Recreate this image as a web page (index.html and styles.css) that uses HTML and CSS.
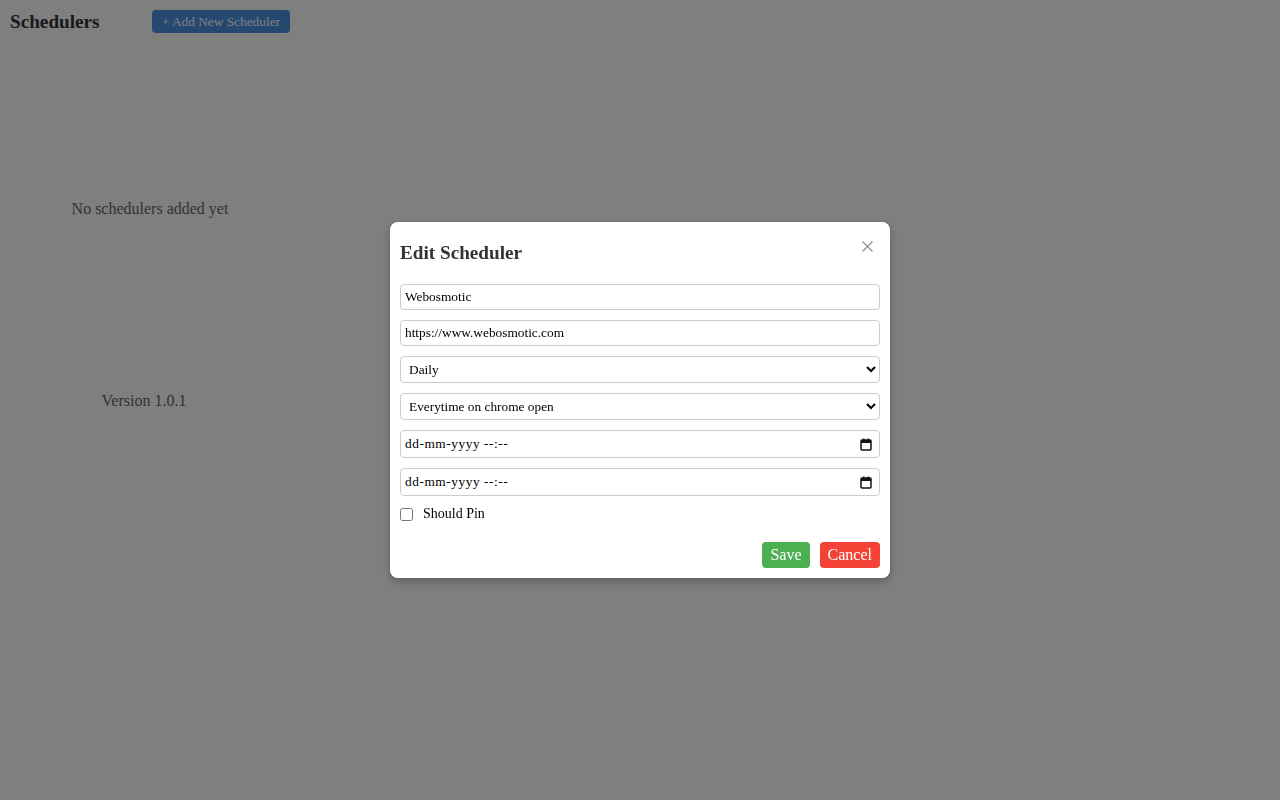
FILE: index.html
```html
<!DOCTYPE html>
<html lang="en">
<head>
<meta charset="utf-8">
<title>Schedulers</title>
<link rel="stylesheet" href="styles.css">
</head>
<body>
<div class="app">
  <header class="app-header">
    <h1 class="app-title">Schedulers</h1>
    <button class="btn-add">+ Add New Scheduler</button>
  </header>
  <div class="empty">No schedulers added yet</div>
  <div class="version">Version 1.0.1</div>
</div>

<div class="overlay">
  <div class="modal">
    <div class="modal-header">
      <h2 class="modal-title">Edit Scheduler</h2>
      <button class="modal-close" aria-label="Close">
        <svg width="11" height="11" viewBox="0 0 11 11"><path d="M0.5 0.5 L10.5 10.5 M10.5 0.5 L0.5 10.5" stroke="#8a8a8a" stroke-width="1.1" fill="none"/></svg>
      </button>
    </div>
    <form class="modal-form">
      <input class="field field-text" type="text" value="Webosmotic">
      <input class="field field-text" type="text" value="https://www.webosmotic.com">
      <select class="field field-select">
        <option>Daily</option>
      </select>
      <select class="field field-select">
        <option>Everytime on chrome open</option>
      </select>
      <div class="field field-date">
        <span class="date-placeholder">dd-mm-yyyy --:--</span>
        <svg class="cal-icon" width="12" height="13" viewBox="0 0 12 13"><rect x="1" y="2" width="10" height="10" rx="1" fill="none" stroke="#111" stroke-width="1.5"/><rect x="1" y="2" width="10" height="3" fill="#111"/><rect x="3" y="0.5" width="1.5" height="2" fill="#111"/><rect x="7.5" y="0.5" width="1.5" height="2" fill="#111"/></svg>
      </div>
      <div class="field field-date">
        <span class="date-placeholder">dd-mm-yyyy --:--</span>
        <svg class="cal-icon" width="12" height="13" viewBox="0 0 12 13"><rect x="1" y="2" width="10" height="10" rx="1" fill="none" stroke="#111" stroke-width="1.5"/><rect x="1" y="2" width="10" height="3" fill="#111"/><rect x="3" y="0.5" width="1.5" height="2" fill="#111"/><rect x="7.5" y="0.5" width="1.5" height="2" fill="#111"/></svg>
      </div>
      <label class="pin-row">
        <input class="pin-check" type="checkbox">
        <span class="pin-label">Should Pin</span>
      </label>
      <div class="actions">
        <button type="button" class="btn btn-save">Save</button>
        <button type="button" class="btn btn-cancel">Cancel</button>
      </div>
    </form>
  </div>
</div>
</body>
</html>
```

FILE: styles.css
```css
html, body {
  margin: 0;
  padding: 0;
  background: #ffffff;
  font-family: "Liberation Serif", "Times New Roman", serif;
  color: #000;
}

.app {
  width: 300px;
  padding: 10px;
  box-sizing: border-box;
}

.app-header {
  display: flex;
  justify-content: space-between;
  align-items: center;
}

.app-title {
  margin: 0;
  font-size: 19.2px;
  font-weight: bold;
  color: #333;
}

.btn-add {
  background: #4a90e2;
  color: #fff;
  border: none;
  border-radius: 4px;
  padding: 4px 10px;
  font-family: "Liberation Serif", "Times New Roman", serif;
  font-size: 13.333px;
  line-height: 15px;
}

.empty {
  margin-top: 167px;
  text-align: center;
  font-size: 16px;
  line-height: 18px;
  color: #666;
}

.version {
  margin-top: 174px;
  text-align: center;
  padding-right: 12px;
  font-size: 16px;
  line-height: 18px;
  color: #666;
}

.overlay {
  position: fixed;
  inset: 0;
  background: rgba(0, 0, 0, 0.5);
  display: flex;
  align-items: center;
  justify-content: center;
}

.modal {
  width: 500px;
  box-sizing: border-box;
  background: #fff;
  border-radius: 8px;
  padding: 10px;
  box-shadow: 0 4px 8px rgba(0, 0, 0, 0.25);
}

.modal-header {
  display: flex;
  justify-content: space-between;
  align-items: flex-start;
}

.modal-title {
  margin: 10px 0 0;
  font-size: 19.2px;
  line-height: 22px;
  font-weight: bold;
  color: #333;
}

.modal-close {
  margin: 9px 7px 0 0;
  padding: 0;
  border: none;
  background: none;
  width: 11px;
  height: 11px;
  display: flex;
}

.modal-form {
  margin-top: 20px;
  display: flex;
  flex-direction: column;
  gap: 10px;
}

.field {
  box-sizing: border-box;
  width: 100%;
  border: 1px solid #ccc;
  border-radius: 4px;
  font-family: "Liberation Serif", "Times New Roman", serif;
  font-size: 13.333px;
  color: #000;
  background: #fff;
  margin: 0;
}

.field-text {
  height: 26px;
  padding: 4px;
}

.field-select {
  height: 27px;
  padding: 4px 4px;
}

.field-date {
  height: 28px;
  padding: 0 4px;
  display: flex;
  align-items: center;
  justify-content: space-between;
  font-size: 13.333px;
}

.date-placeholder {
  color: #000;
  letter-spacing: 0.55px;
}

.cal-icon {
  margin-right: 3px;
}

.pin-row {
  display: flex;
  align-items: center;
  height: 16px;
  margin-top: 0;
}

.pin-check {
  width: 13px;
  height: 13px;
  margin: 0 10px 0 0;
}

.pin-label {
  font-size: 14px;
  line-height: 16px;
}

.actions {
  display: flex;
  justify-content: flex-end;
  gap: 10px;
  margin-top: 10px;
}

.btn {
  border: none;
  border-radius: 4px;
  padding: 4px 8px;
  font-family: "Liberation Serif", "Times New Roman", serif;
  font-size: 16px;
  line-height: 18px;
  color: #fff;
}

.btn-save {
  background: #4caf50;
}

.btn-cancel {
  background: #f44336;
}
```
